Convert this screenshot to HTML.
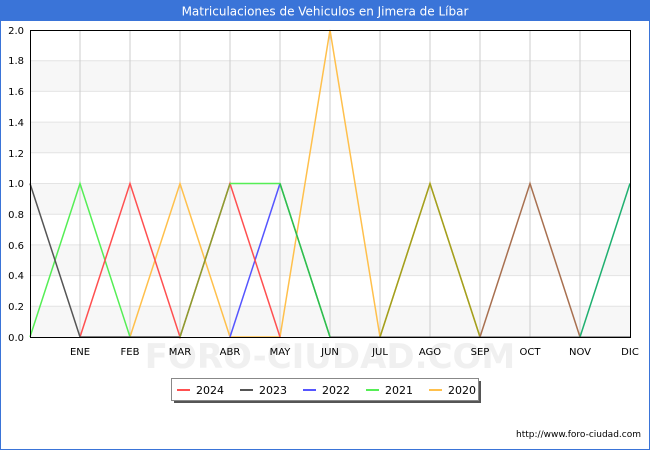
<!DOCTYPE html>
<html><head><meta charset="utf-8"><style>
html,body{margin:0;padding:0;background:#fff}
svg{display:block;font-family:"DejaVu Sans","Liberation Sans",sans-serif}
</style></head><body>
<svg width="650" height="450" viewBox="0 0 650 450" xmlns="http://www.w3.org/2000/svg">
<rect x="0.5" y="0.5" width="649" height="449" fill="#fff" stroke="#3a74d8"/>
<rect x="0" y="0" width="650" height="21" fill="#3a74d8"/>
<text x="325" y="15.5" text-anchor="middle" font-size="12" fill="#fff">Matriculaciones de Vehiculos en Jimera de Líbar</text>
<g fill="#f7f7f7">
<rect x="30" y="306.3" width="600" height="30.7"/>
<rect x="30" y="244.9" width="600" height="30.7"/>
<rect x="30" y="183.5" width="600" height="30.7"/>
<rect x="30" y="122.1" width="600" height="30.7"/>
<rect x="30" y="60.7" width="600" height="30.7"/>
</g>
<g stroke="#e4e4e4" stroke-width="1">
<line x1="30" x2="630" y1="306.3" y2="306.3"/><line x1="30" x2="630" y1="275.6" y2="275.6"/>
<line x1="30" x2="630" y1="244.9" y2="244.9"/><line x1="30" x2="630" y1="214.2" y2="214.2"/>
<line x1="30" x2="630" y1="183.5" y2="183.5"/><line x1="30" x2="630" y1="152.8" y2="152.8"/>
<line x1="30" x2="630" y1="122.1" y2="122.1"/><line x1="30" x2="630" y1="91.4" y2="91.4"/>
<line x1="30" x2="630" y1="60.7" y2="60.7"/>
</g>
<g stroke="#cccccc" stroke-width="1">
<line x1="80" x2="80" y1="30" y2="337"/><line x1="130" x2="130" y1="30" y2="337"/>
<line x1="180" x2="180" y1="30" y2="337"/><line x1="230" x2="230" y1="30" y2="337"/>
<line x1="280" x2="280" y1="30" y2="337"/><line x1="330" x2="330" y1="30" y2="337"/>
<line x1="380" x2="380" y1="30" y2="337"/><line x1="430" x2="430" y1="30" y2="337"/>
<line x1="480" x2="480" y1="30" y2="337"/><line x1="530" x2="530" y1="30" y2="337"/>
<line x1="580" x2="580" y1="30" y2="337"/>
</g>
<text x="330" y="368" text-anchor="middle" font-size="34" fill="#f0f0f0" font-weight="bold">FORO-CIUDAD.COM</text>
<g fill="none" stroke-width="1.5">
<polyline stroke="#ffc04c" points="130,337 180,183.5 230,337 280,337 330,30 380,337 430,183.5 480,337"/>
<polyline stroke="#55ee55" points="30,337 80,183.5 130,337"/>
<polyline stroke="#5555ff" points="230,337 280,183.5"/>
<polyline stroke="#ff5050" points="80,337 130,183.5 180,337 230,183.5 280,337"/>
<polyline stroke="#555555" points="30,183.5 80,337 180,337"/>
<polyline stroke="#88a030" points="180,337 230,183.5"/>
<polyline stroke="#55ee55" points="230,183.5 280,183.5 330,337"/>
<polyline stroke="#2fbb50" points="280,183.5 330,337"/>
<polyline stroke="#a0a020" points="380,337 430,183.5 480,337"/>
<polyline stroke="#a87050" points="480,337 530,183.5 580,337"/>
<polyline stroke="#1fb070" points="580,337 630,183.5"/>
<polyline stroke="#444" stroke-width="1" points="330,337 630,337"/>
</g>
<rect x="30.5" y="30.5" width="600" height="307" fill="none" stroke="#000"/>
<g font-size="10" fill="#000" text-anchor="end">
<text x="24" y="341">0.0</text><text x="24" y="310">0.2</text><text x="24" y="279">0.4</text>
<text x="24" y="249">0.6</text><text x="24" y="218">0.8</text><text x="24" y="187">1.0</text>
<text x="24" y="157">1.2</text><text x="24" y="126">1.4</text><text x="24" y="95">1.6</text>
<text x="24" y="64">1.8</text><text x="24" y="34">2.0</text>
</g>
<g font-size="10" fill="#000" text-anchor="middle">
<text x="80" y="355">ENE</text><text x="130" y="355">FEB</text><text x="180" y="355">MAR</text>
<text x="230" y="355">ABR</text><text x="280" y="355">MAY</text><text x="330" y="355">JUN</text>
<text x="380" y="355">JUL</text><text x="430" y="355">AGO</text><text x="480" y="355">SEP</text>
<text x="530" y="355">OCT</text><text x="580" y="355">NOV</text><text x="630" y="355">DIC</text>
</g>
<rect x="174" y="381" width="307" height="22" fill="#555"/>
<rect x="171.5" y="378.5" width="307" height="22" fill="#fff" stroke="#888"/>
<g stroke-width="2">
<line x1="177" x2="190" y1="390" y2="390" stroke="#ff5050"/>
<line x1="240" x2="253" y1="390" y2="390" stroke="#555"/>
<line x1="303" x2="316" y1="390" y2="390" stroke="#5555ff"/>
<line x1="366" x2="379" y1="390" y2="390" stroke="#55ee55"/>
<line x1="429" x2="442" y1="390" y2="390" stroke="#ffc04c"/>
</g>
<g font-size="11" fill="#000">
<text x="196" y="394">2024</text><text x="259" y="394">2023</text><text x="322" y="394">2022</text>
<text x="385" y="394">2021</text><text x="448" y="394">2020</text>
</g>
<text x="641" y="437" text-anchor="end" font-size="9" fill="#000">http://www.foro-ciudad.com</text>
</svg>
</body></html>
